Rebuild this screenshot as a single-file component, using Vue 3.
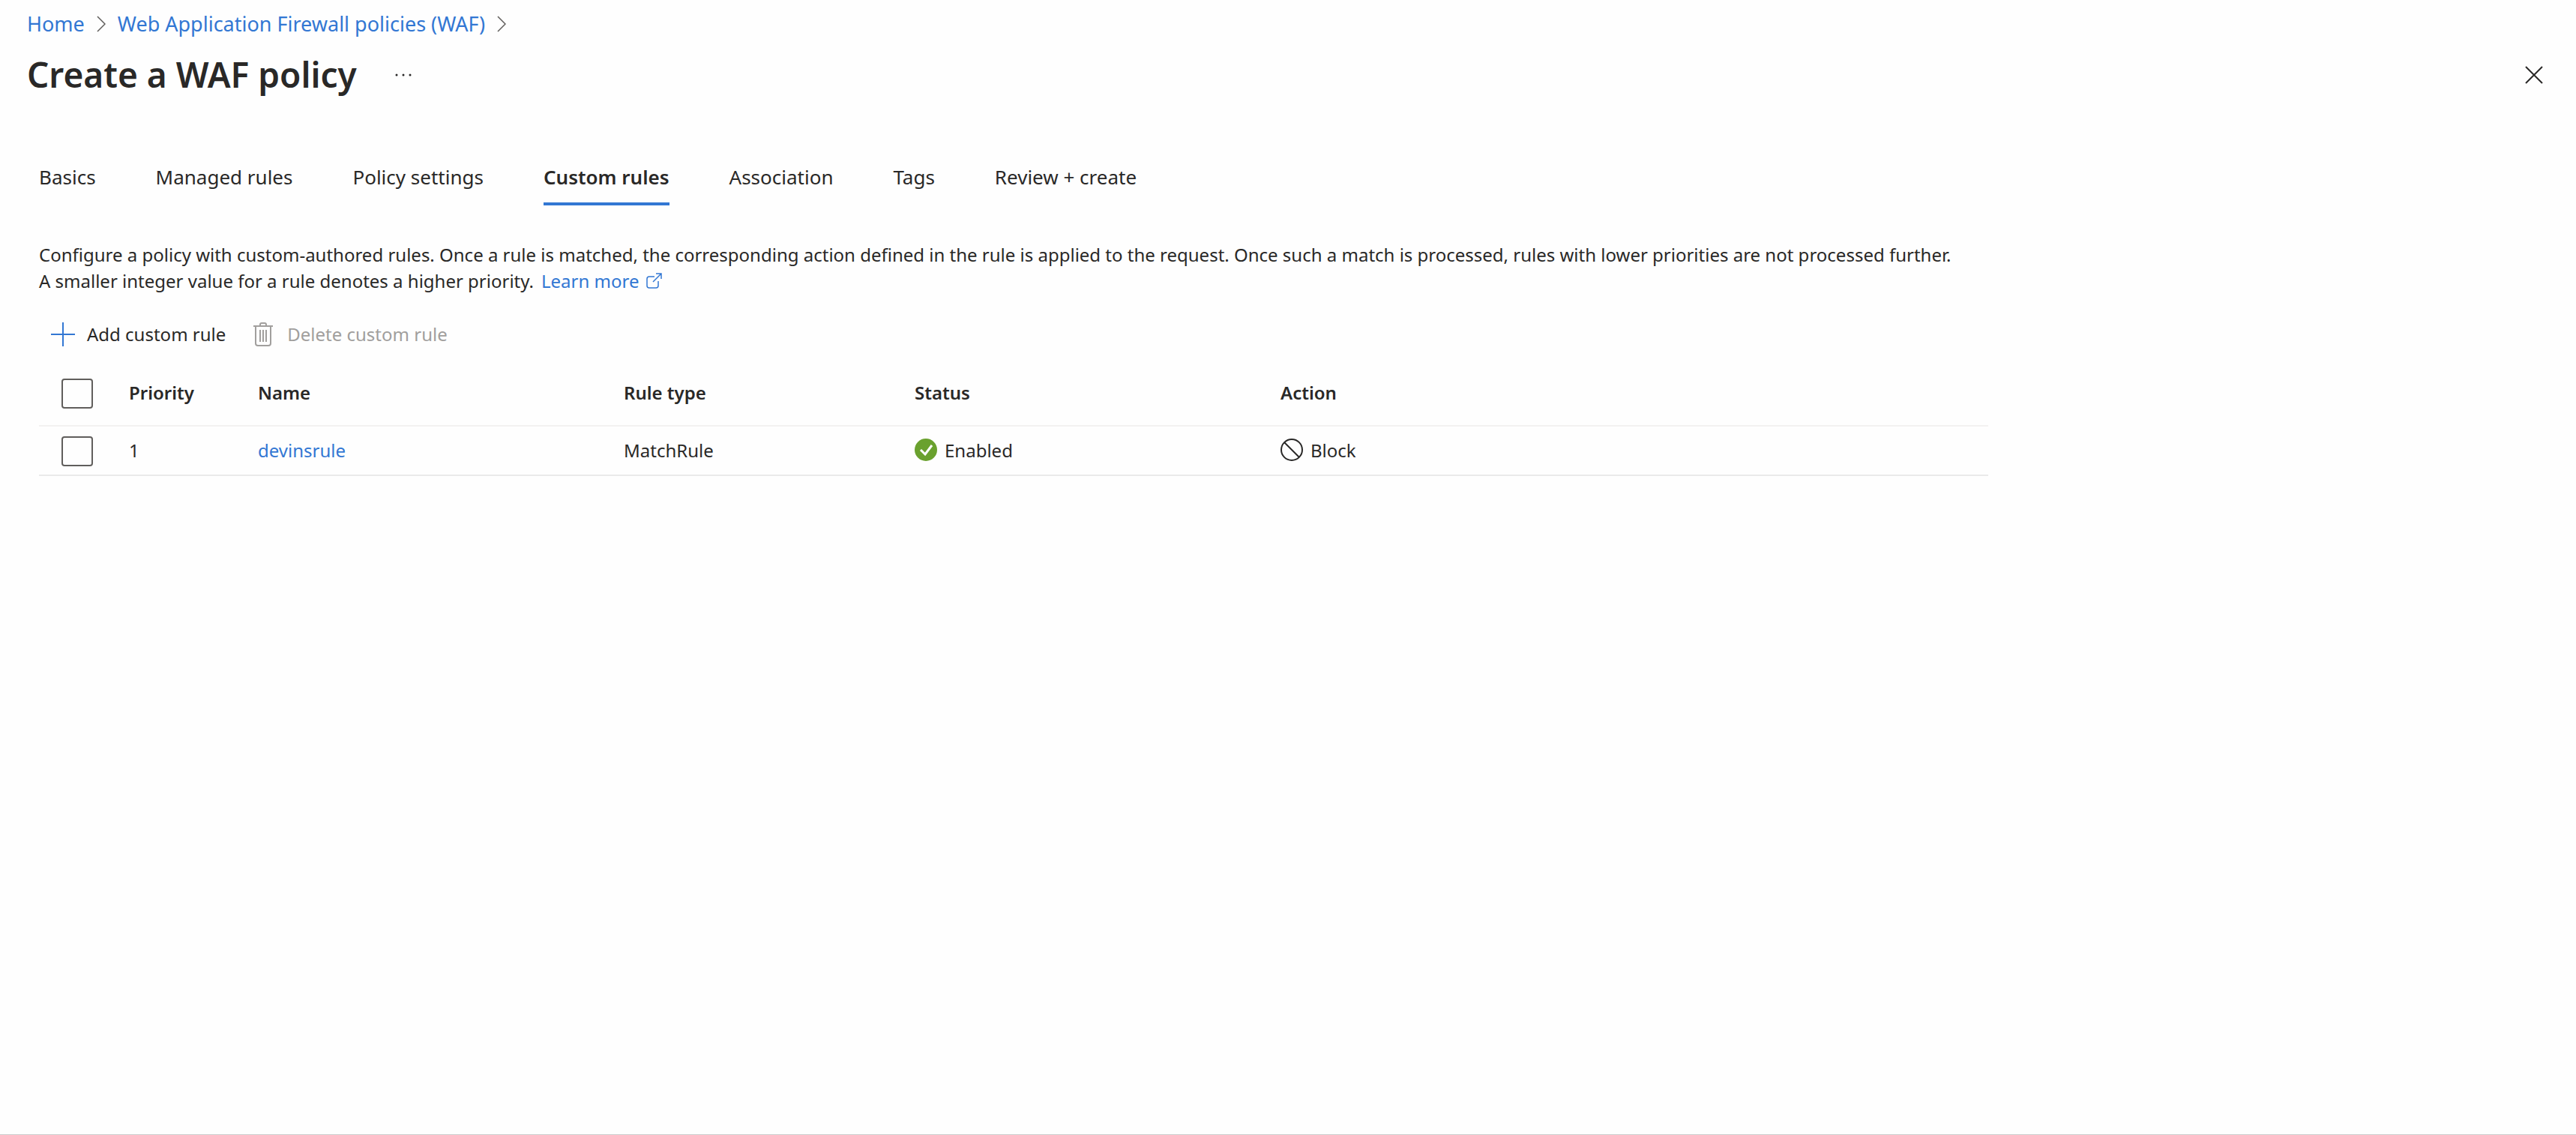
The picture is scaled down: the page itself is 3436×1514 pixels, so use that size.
<script setup>
import { ref } from 'vue'

const tabs = ['Basics', 'Managed rules', 'Policy settings', 'Custom rules', 'Association', 'Tags', 'Review + create']
const activeTab = ref('Custom rules')

const rules = ref([
  { priority: 1, name: 'devinsrule', type: 'MatchRule', status: 'Enabled', action: 'Block', selected: false },
])
const allSelected = ref(false)

function toggleAll() {
  rules.value.forEach((rule) => (rule.selected = allSelected.value))
}
</script>

<template>
  <main class="blade">
    <nav class="breadcrumb" aria-label="Breadcrumb">
      <a href="#">Home</a>
      <svg class="chevron" viewBox="0 0 12 22" aria-hidden="true"><path d="M1 1l10 10L1 21" /></svg>
      <a href="#">Web Application Firewall policies (WAF)</a>
      <svg class="chevron" viewBox="0 0 12 22" aria-hidden="true"><path d="M1 1l10 10L1 21" /></svg>
    </nav>

    <header class="title-bar">
      <h1>Create a WAF policy</h1>
      <button class="icon-button more" type="button" aria-label="More actions">
        <svg viewBox="0 0 24 24" aria-hidden="true">
          <circle cx="3" cy="12" r="1.5" /><circle cx="12" cy="12" r="1.5" /><circle cx="21" cy="12" r="1.5" />
        </svg>
      </button>
      <button class="icon-button close" type="button" aria-label="Close">
        <svg viewBox="0 0 24 24" aria-hidden="true"><path d="M1 1l22 22M23 1L1 23" /></svg>
      </button>
    </header>

    <div class="content">
      <div class="tabs" role="tablist">
        <button
          v-for="tab in tabs"
          :key="tab"
          type="button"
          role="tab"
          class="tab"
          :class="{ active: tab === activeTab }"
          :aria-selected="tab === activeTab"
          @click="activeTab = tab"
        >{{ tab }}</button>
      </div>

      <div class="description">
        <p>
          Configure a policy with custom-authored rules. Once a rule is matched, the corresponding action defined in the
          rule is applied to the request. Once such a match is processed, rules with lower priorities are not processed
          further.
        </p>
        <p class="note">
          <span>A smaller integer value for a rule denotes a higher priority.</span>
          <a href="#" class="learn">
            <span>Learn more</span>
            <svg class="external" viewBox="0 0 22 22" aria-hidden="true">
              <path d="M11 5H4Q1 5 1 8V17Q1 20 4 20H13Q16 20 16 17V11M13 1H20V8M20 1L9 12" />
            </svg>
          </a>
        </p>
      </div>

      <div class="toolbar">
        <button type="button" class="command">
          <svg class="plus" viewBox="0 0 32 32" aria-hidden="true"><path d="M16 0V32M0 16H32" /></svg>
          <span>Add custom rule</span>
        </button>
        <button type="button" class="command" disabled>
          <svg class="trash" viewBox="0 0 32 32" aria-hidden="true">
            <path d="M3 5H29M12 5V3Q12 1 14 1H18Q20 1 20 3V5M6 5V28Q6 31 9 31H23Q26 31 26 28V5M12 10V26M16 10V26M20 10V26" />
          </svg>
          <span>Delete custom rule</span>
        </button>
      </div>

      <table class="rules">
        <colgroup>
          <col class="col-select" /><col class="col-priority" /><col class="col-name" />
          <col class="col-type" /><col class="col-status" /><col />
        </colgroup>
        <thead>
          <tr>
            <th class="select">
              <input v-model="allSelected" type="checkbox" aria-label="Select all rules" @change="toggleAll" />
            </th>
            <th>Priority</th>
            <th>Name</th>
            <th>Rule type</th>
            <th>Status</th>
            <th>Action</th>
          </tr>
        </thead>
        <tbody>
          <tr v-for="rule in rules" :key="rule.name">
            <td class="select">
              <input v-model="rule.selected" type="checkbox" :aria-label="`Select ${rule.name}`" />
            </td>
            <td>{{ rule.priority }}</td>
            <td><a href="#">{{ rule.name }}</a></td>
            <td>{{ rule.type }}</td>
            <td>
              <span class="with-icon">
                <svg viewBox="0 0 30 30" aria-hidden="true">
                  <circle cx="15" cy="15" r="15" fill="#6aa12e" />
                  <path d="M8 15l6 6L23 9" fill="none" stroke="#fff" stroke-width="3" />
                </svg>
                <span>{{ rule.status }}</span>
              </span>
            </td>
            <td>
              <span class="with-icon">
                <svg viewBox="0 0 30 30" fill="none" stroke="#292827" stroke-width="2" aria-hidden="true">
                  <circle cx="15" cy="15" r="14" /><path d="M5 5l20 20" />
                </svg>
                <span>{{ rule.action }}</span>
              </span>
            </td>
          </tr>
        </tbody>
      </table>
    </div>
  </main>
</template>

<style>
body {
  background: #fefefe;
}
</style>

<style scoped>
.blade {
  box-sizing: border-box;
  min-height: 100vh;
  border-bottom: 1px solid #cccccc;
  color: #292827;
  font-family: "Noto Sans", "Open Sans", sans-serif;
  font-size: 24px;
  line-height: 35px;
}

a {
  color: #3277d3;
  text-decoration: none;
}

button {
  margin: 0;
  padding: 0;
  border: 0;
  background: none;
  color: inherit;
  font: inherit;
  cursor: pointer;
}

svg {
  display: block;
  flex: none;
}

.breadcrumb {
  display: flex;
  align-items: center;
  gap: 16px;
  padding: 14px 36px 0;
  font-size: 27px;
  line-height: 36px;
}

.chevron {
  width: 12px;
  height: 22px;
  fill: none;
  stroke: #605e5c;
  stroke-width: 1.5;
}

.title-bar {
  display: flex;
  align-items: center;
  padding: 18px 44px 0 36px;
}

h1 {
  margin: 0;
  padding-bottom: 2px;
  font-size: 46px;
  font-weight: 600;
  line-height: 62px;
}

.icon-button svg {
  width: 24px;
  height: 24px;
}

.more {
  margin-left: 50px;
}

.more svg {
  fill: #292827;
}

.close {
  margin-left: auto;
}

.close svg {
  stroke: #292827;
  stroke-width: 2;
}

.content {
  max-width: 2600px;
  padding: 86px 52px 0;
}

.tabs {
  display: flex;
  gap: 80px;
}

.tab {
  padding-bottom: 16px;
  border-bottom: 4px solid transparent;
  font-size: 26px;
  line-height: 36px;
}

.tab.active {
  border-color: #3277d3;
  font-weight: 600;
}

.description {
  margin-top: 48px;
}

p {
  margin: 0;
}

.note,
.learn {
  display: flex;
  align-items: center;
  gap: 10px;
}

.external {
  width: 22px;
  height: 22px;
  fill: none;
  stroke: #3277d3;
  stroke-width: 1.5;
}

.toolbar {
  display: flex;
  gap: 34px;
  margin-top: 36px;
  padding-left: 16px;
}

.command {
  display: flex;
  align-items: center;
  gap: 16px;
}

.command:disabled {
  color: #a19f9d;
  cursor: default;
}

.plus,
.trash {
  width: 32px;
  height: 32px;
  fill: none;
  stroke: #3277d3;
  stroke-width: 2;
}

.trash {
  stroke: #a19f9d;
}

.rules {
  width: 100%;
  margin-top: 18px;
  border-collapse: separate;
  border-spacing: 0;
  table-layout: fixed;
}

.col-select {
  width: 120px;
}

.col-priority {
  width: 172px;
}

.col-name,
.col-status {
  width: 488px;
}

.col-type {
  width: 388px;
}

th,
td {
  box-sizing: border-box;
  padding: 0 0 2px;
  text-align: left;
}

th {
  height: 88px;
  border-bottom: 2px solid #f3f2f1;
  font-weight: 600;
}

td {
  height: 66px;
  border-bottom: 2px solid #eaeaea;
}

.select {
  padding: 2px 0 0 30px;
}

input[type="checkbox"] {
  appearance: none;
  display: block;
  box-sizing: border-box;
  width: 42px;
  height: 40px;
  margin: 0;
  border: 2px solid #605e5c;
  border-radius: 4px;
}

input[type="checkbox"]:checked {
  background: #3277d3;
}

.with-icon {
  display: flex;
  align-items: center;
  gap: 10px;
}

.with-icon svg {
  width: 30px;
  height: 30px;
}
</style>
